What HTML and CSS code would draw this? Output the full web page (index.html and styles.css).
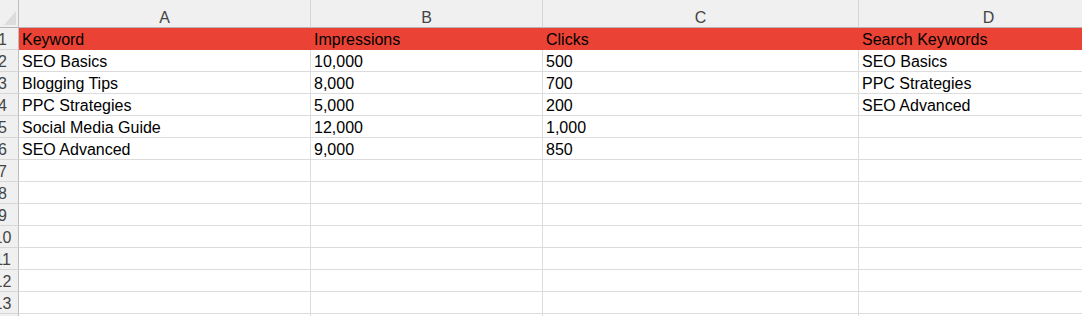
FILE: index.html
```html
<!DOCTYPE html>
<html>
<head>
<meta charset="utf-8">
<link rel="stylesheet" href="styles.css">
</head>
<body>
<div class="sheet">
  <div class="grid">
    <div class="corner"><svg width="31" height="27" viewBox="0 0 31 27"><polygon points="17,25 29,25 29,11" fill="#dcdcdc"/></svg></div>
    <div class="colhead">A</div><div class="colhead">B</div><div class="colhead">C</div><div class="colhead">D</div>

    <div class="rowhead">1</div><div class="cell hdr">Keyword</div><div class="cell hdr">Impressions</div><div class="cell hdr">Clicks</div><div class="cell hdr">Search Keywords</div>
    <div class="rowhead">2</div><div class="cell">SEO Basics</div><div class="cell">10,000</div><div class="cell">500</div><div class="cell">SEO Basics</div>
    <div class="rowhead">3</div><div class="cell">Blogging Tips</div><div class="cell">8,000</div><div class="cell">700</div><div class="cell">PPC Strategies</div>
    <div class="rowhead">4</div><div class="cell">PPC Strategies</div><div class="cell">5,000</div><div class="cell">200</div><div class="cell">SEO Advanced</div>
    <div class="rowhead">5</div><div class="cell">Social Media Guide</div><div class="cell">12,000</div><div class="cell">1,000</div><div class="cell"></div>
    <div class="rowhead">6</div><div class="cell">SEO Advanced</div><div class="cell">9,000</div><div class="cell">850</div><div class="cell"></div>
    <div class="rowhead">7</div><div class="cell"></div><div class="cell"></div><div class="cell"></div><div class="cell"></div>
    <div class="rowhead">8</div><div class="cell"></div><div class="cell"></div><div class="cell"></div><div class="cell"></div>
    <div class="rowhead">9</div><div class="cell"></div><div class="cell"></div><div class="cell"></div><div class="cell"></div>
    <div class="rowhead">10</div><div class="cell"></div><div class="cell"></div><div class="cell"></div><div class="cell"></div>
    <div class="rowhead">11</div><div class="cell"></div><div class="cell"></div><div class="cell"></div><div class="cell"></div>
    <div class="rowhead">12</div><div class="cell"></div><div class="cell"></div><div class="cell"></div><div class="cell"></div>
    <div class="rowhead">13</div><div class="cell"></div><div class="cell"></div><div class="cell"></div><div class="cell"></div>
    <div class="rowhead">14</div><div class="cell"></div><div class="cell"></div><div class="cell"></div><div class="cell"></div>
  </div>
</div>
</body>
</html>
```

FILE: styles.css
```css
html, body {
  margin: 0;
  padding: 0;
  background: #ffffff;
  overflow: hidden;
}
.sheet {
  width: 1082px;
  height: 316px;
  overflow: hidden;
  font-family: "Liberation Sans", Arial, sans-serif;
  font-size: 16px;
  color: #000000;
}
.grid {
  display: grid;
  grid-template-columns: 32px 292px 232px 316px 260px;
  grid-auto-rows: 22px;
  grid-template-rows: 28px;
  margin-left: -13px;
  width: max-content;
}
.corner, .colhead, .rowhead, .cell {
  box-sizing: border-box;
  display: flex;
  align-items: flex-end;
  line-height: 18px;
  white-space: nowrap;
  overflow: hidden;
}
.corner {
  background: #f0f0f0;
  border-right: 1px solid #bdbdbd;
  border-bottom: 1px solid #b5b5b5;
  align-items: flex-start;
}
.corner svg { display: block; }
.colhead {
  background: #f0f0f0;
  color: #444444;
  justify-content: center;
  border-right: 1px solid #d6d6d6;
  border-bottom: 1px solid #b5b5b5;
}
.rowhead {
  background: #f0f0f0;
  color: #444444;
  justify-content: center;
  border-right: 1px solid #bdbdbd;
  border-bottom: 1px solid #d6d6d6;
}
.cell {
  padding: 0 3px;
  border-right: 1px solid #dcdcdc;
  border-bottom: 1px solid #dcdcdc;
}
.cell.hdr {
  background: #ea4335;
  border-right-color: #ea4335;
  border-bottom-color: #ea4335;
}
```
